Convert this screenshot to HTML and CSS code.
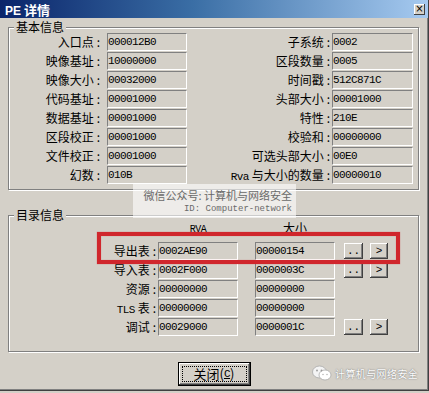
FILE: index.html
```html
<!DOCTYPE html>
<html>
	<head>
		<meta charset="UTF-8">
		<title>PE 详情</title>
		<link rel="stylesheet" href="styles.css">
	</head>
	<body>
		<div class="window">
			<div class="titlebar">
				<span class="title"><b class="lat">PE</b> 详情</span>
				<span class="x-btn">×</span>
			</div>
			<div class="client">
				<fieldset class="group basic">
					<legend>基本信息</legend>
					<div class="basic-grid">
						<label>入口点<span class="c">:</span></label><div class="field">000012B0</div>
						<label>子系统<span class="c">:</span></label><div class="field">0002</div>
						<label>映像基址<span class="c">:</span></label><div class="field">10000000</div>
						<label>区段数量<span class="c">:</span></label><div class="field">0005</div>
						<label>映像大小<span class="c">:</span></label><div class="field">00032000</div>
						<label>时间戳<span class="c">:</span></label><div class="field">512C871C</div>
						<label>代码基址<span class="c">:</span></label><div class="field">00001000</div>
						<label>头部大小<span class="c">:</span></label><div class="field">00001000</div>
						<label>数据基址<span class="c">:</span></label><div class="field">00001000</div>
						<label>特性<span class="c">:</span></label><div class="field">210E</div>
						<label>区段校正<span class="c">:</span></label><div class="field">00001000</div>
						<label>校验和<span class="c">:</span></label><div class="field">00000000</div>
						<label>文件校正<span class="c">:</span></label><div class="field">00001000</div>
						<label>可选头部大小<span class="c">:</span></label><div class="field">00E0</div>
						<label>幻数<span class="c">:</span></label><div class="field">010B</div>
						<label><span class="lat">Rva</span>&nbsp;与大小的数量<span class="c">:</span></label><div class="field">00000010</div>
					</div>
				</fieldset>

				<fieldset class="group dir">
					<legend>目录信息</legend>
					<div class="dir-grid">
						<span></span><span class="head lat">RVA</span><span class="head">大小</span><span></span><span></span>

						<label>导出表<span class="c">:</span></label>
						<div class="field">0002AE90</div>
						<div class="field">00000154</div>
						<span class="btn small">..</span><span class="btn small">&gt;</span>

						<label>导入表<span class="c">:</span></label>
						<div class="field">0002F000</div>
						<div class="field">0000003C</div>
						<span class="btn small">..</span><span class="btn small">&gt;</span>

						<label>资源<span class="c">:</span></label>
						<div class="field">00000000</div>
						<div class="field">00000000</div>
						<span></span><span></span>

						<label><span class="lat">TLS</span>&nbsp;表<span class="c">:</span></label>
						<div class="field">00000000</div>
						<div class="field">00000000</div>
						<span></span><span></span>

						<label>调试<span class="c">:</span></label>
						<div class="field">00029000</div>
						<div class="field">0000001C</div>
						<span class="btn small">..</span><span class="btn small">&gt;</span>
					</div>
				</fieldset>

				<div class="footer">
					<span class="btn default"><span class="focus">关闭(<u class="lat">C</u>)</span></span>
				</div>
			</div>

			<!-- watermarks and the red marker sit over the dialog -->
			<div class="wm-center">
				<p>微信公众号: 计算机与网络安全</p>
				<p class="id">ID: Computer-network</p>
			</div>
			<div class="redbox"></div>
			<div class="wm-corner">
				<svg width="20" height="16" viewBox="0 0 20 16">
					<ellipse cx="7.5" cy="7" rx="7" ry="6" fill="#f4f4f4" stroke="#aaa" stroke-width="0.8"/>
					<ellipse cx="13" cy="10" rx="6" ry="5" fill="#fff" stroke="#aaa" stroke-width="0.8"/>
					<circle cx="5" cy="5.5" r="0.9" fill="#999"/>
					<circle cx="9.5" cy="5.5" r="0.9" fill="#999"/>
					<circle cx="11" cy="9.5" r="0.7" fill="#aaa"/>
					<circle cx="15" cy="9.5" r="0.7" fill="#aaa"/>
				</svg>
				<span>计算机与网络安全</span>
			</div>
		</div>
	</body>
</html>
```

FILE: styles.css
```css
* {
	margin: 0;
	padding: 0;
	box-sizing: border-box;
}

body {
	width: 429px;
	height: 393px;
	overflow: hidden;
	background: #d4d0c8;
	font-family: "Noto Sans CJK SC", sans-serif;
	font-size: 12px;
	color: #000;
}

.lat {
	font-family: "Liberation Mono", "Noto Sans CJK SC", monospace;
	font-size: 11px;
	letter-spacing: -0.5px;
}

.window {
	position: relative;
	width: 429px;
	height: 391px;
	background: #d4d0c8;
	border-right: 1px solid #404040;
	border-bottom: 1px solid #404040;
	box-shadow: inset -1px -1px 0 #808080;
}

/* title bar */
.titlebar {
	height: 18px;
	display: flex;
	align-items: center;
	padding: 0 3px 0 5px;
	background: linear-gradient(to right, #0a246a, #3a6ea5 45%, #a6caf0);
}

.title {
	color: #fff;
	font-weight: bold;
	font-size: 13px;
	line-height: 16px;
	padding-top: 2px;
}

.title .lat {
	font-family: "Liberation Sans", sans-serif;
	font-size: 12px;
	letter-spacing: 0;
}

.x-btn {
	margin-left: auto;
	width: 11px;
	height: 11px;
	background: #d4d0c8;
	box-shadow: inset -1px -1px 0 #404040, inset 1px 1px 0 #fff;
	font-family: "DejaVu Sans", sans-serif;
	font-size: 10px;
	line-height: 10px;
	text-align: center;
	color: #000;
}

/* dialog client area */
.client {
	padding: 0 9px 0 8px;
}

.group {
	border: 1px solid #808080;
	box-shadow: 1px 1px 0 #fff, inset 1px 1px 0 #fff;
	min-width: 0;
}

.group legend {
	margin-left: 5px;
	padding: 0 2px;
	line-height: 12px;
	background: #d4d0c8;
}

.basic {
	margin-top: 3px;
	padding-bottom: 5px;
}

.dir {
	margin-top: 19px;
	padding-bottom: 15px;
}

label {
	display: block;
	text-align: right;
	white-space: nowrap;
	line-height: 18px;
}

label .c {
	padding-left: 3px;
}

.field {
	border-top: 1px solid #808080;
	border-left: 1px solid #808080;
	border-bottom: 1px solid #fff;
	border-right: 1px solid #fff;
	font-family: "Liberation Mono", monospace;
	font-size: 11px;
	letter-spacing: -0.6px;
	line-height: 16px;
	white-space: nowrap;
}

.basic-grid {
	display: grid;
	grid-template-columns: 98px 80px 145px 81px;
	grid-auto-rows: 18px;
	row-gap: 1px;
}

.basic-grid label:nth-child(4n+1) {
	padding-right: 7px;
}

.basic-grid label:nth-child(4n+3) {
	padding-right: 2px;
}

.dir-grid {
	display: grid;
	grid-template-columns: 149px 97px 89px 26px 18px;
	grid-template-rows: 20px repeat(5, 18px);
	row-gap: 1px;
}

.dir-grid label {
	padding-right: 2px;
}

.dir-grid .field {
	width: 80px;
}

.head {
	width: 80px;
	text-align: center;
	line-height: 14px;
}

.head.lat {
	font-size: 10px;
	padding-top: 2px;
}

.btn {
	display: flex;
	align-items: center;
	justify-content: center;
	background: #d4d0c8;
	box-shadow: inset -1px -1px 0 #404040, inset 1px 1px 0 #fff, inset -2px -2px 0 #808080;
}

.btn.small {
	width: 19px;
	height: 16px;
	align-self: center;
	font-family: "Liberation Mono", monospace;
	font-size: 11px;
	line-height: 14px;
}

.dir-grid .btn.small:nth-child(5n) {
	width: 18px;
}

.footer {
	display: flex;
	justify-content: center;
	margin-top: 10px;
	padding-left: 1px;
}

.btn.default {
	width: 73px;
	height: 24px;
	border: 1px solid #000;
	padding: 3px;
}

.focus {
	flex: 1;
	align-self: stretch;
	display: flex;
	align-items: center;
	justify-content: center;
	border: 1px dotted #000;
	font-size: 13px;
	line-height: 14px;
}

.focus u {
	font-size: 11px;
}

/* overlays */
.wm-center {
	position: absolute;
	left: 133px;
	top: 184px;
	width: 163px;
	height: 34px;
	padding: 5px 4px 0 0;
	background: rgba(255, 255, 255, 0.6);
	color: #6a6a6a;
	text-align: right;
	font-size: 11px;
	line-height: 13px;
}

.wm-center .id {
	font-family: "Liberation Mono", monospace;
	font-size: 9px;
	line-height: 15px;
}

.redbox {
	position: absolute;
	left: 97px;
	top: 232px;
	width: 303px;
	height: 32px;
	border: 4px solid #d0262c;
	box-shadow: 0 0 1px rgba(208, 38, 44, 0.6), inset 0 0 1px rgba(208, 38, 44, 0.6);
}

.wm-corner {
	position: absolute;
	left: 312px;
	top: 365px;
	display: flex;
	align-items: center;
	gap: 3px;
	color: #fff;
	font-size: 10px;
	letter-spacing: 0.4px;
	text-shadow: 0 0 1px #777, 0 0 2px #999;
}
```
